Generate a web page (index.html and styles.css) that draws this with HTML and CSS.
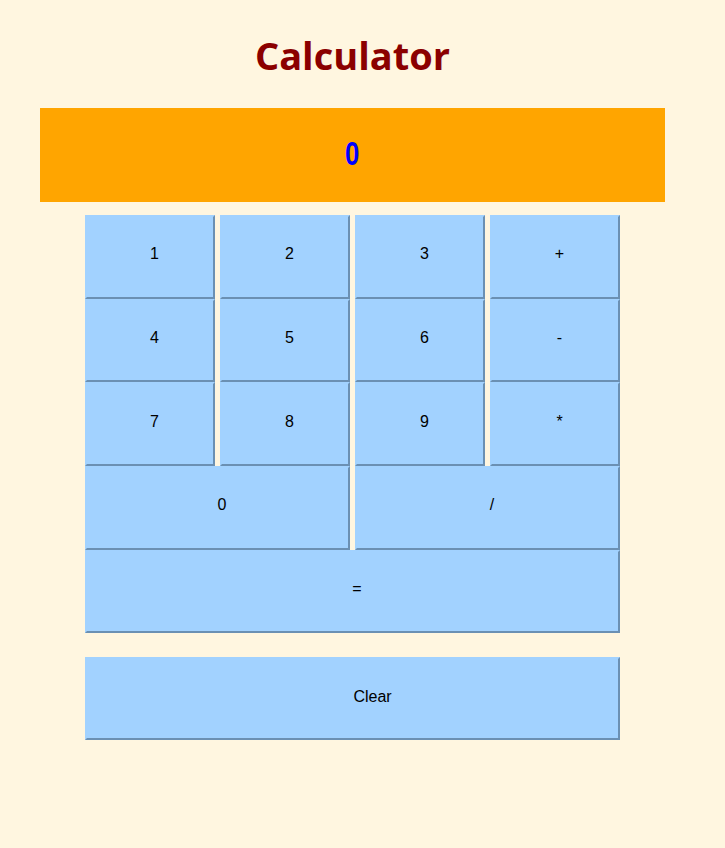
FILE: index.html
```html
<!DOCTYPE html>
<html>
<head>
<meta charset="utf-8">
<title>Calculator</title>
<link rel="stylesheet" href="styles.css">
</head>
<body>
<div class="page">
  <h1 class="title">Calculator</h1>
  <div class="display"><span class="display-value">0</span></div>
  <div class="keys">
    <button class="key">1</button>
    <button class="key">2</button>
    <button class="key">3</button>
    <button class="key">+</button>
    <button class="key">4</button>
    <button class="key">5</button>
    <button class="key">6</button>
    <button class="key">-</button>
    <button class="key">7</button>
    <button class="key">8</button>
    <button class="key">9</button>
    <button class="key">*</button>
    <button class="key span2">0</button>
    <button class="key span2">/</button>
    <button class="key span4">=</button>
  </div>
  <button class="key clear">Clear</button>
</div>
</body>
</html>
```

FILE: styles.css
```css
html, body {
  margin: 0;
  padding: 0;
  background: #fff6e0;
}
.page {
  width: 705px;
  display: flex;
  flex-direction: column;
  align-items: center;
}
.title {
  margin: 32px 0 30px;
  font-family: "Comic Sans MS", "Open Sans", "DejaVu Sans", sans-serif;
  font-weight: bold;
  font-size: 38px;
  line-height: 46px;
  color: #8b0000;
}
.display {
  width: 625px;
  height: 94px;
  background: #ffa500;
  color: #0000ff;
  font-family: Impact, "Liberation Sans", sans-serif;
  font-weight: bold;
  font-size: 33px;
  line-height: 92px;
  text-align: center;
  margin-bottom: 13px;
}
.display-value {
  display: inline-block;
  transform: scaleX(0.78);
}
.keys {
  width: 535px;
  display: grid;
  grid-template-columns: repeat(4, 130px);
  column-gap: 5px;
  row-gap: 0;
}
.key {
  box-sizing: border-box;
  height: 83.7px;
  margin: 0;
  padding: 0 0 5px 9px;
  background: #a2d2ff;
  border: 2px solid;
  border-color: #a2d2ff #6b90b3 #6b90b3 #a2d2ff;
  font-family: "Liberation Sans", Arial, sans-serif;
  font-size: 16px;
  color: #000;
  text-align: center;
}
.span2 { grid-column: span 2; }
.span4 { grid-column: span 4; }
.clear {
  width: 535px;
  height: 83px;
  margin-top: 24px;
  padding: 0 0 4px 40px;
}
```
